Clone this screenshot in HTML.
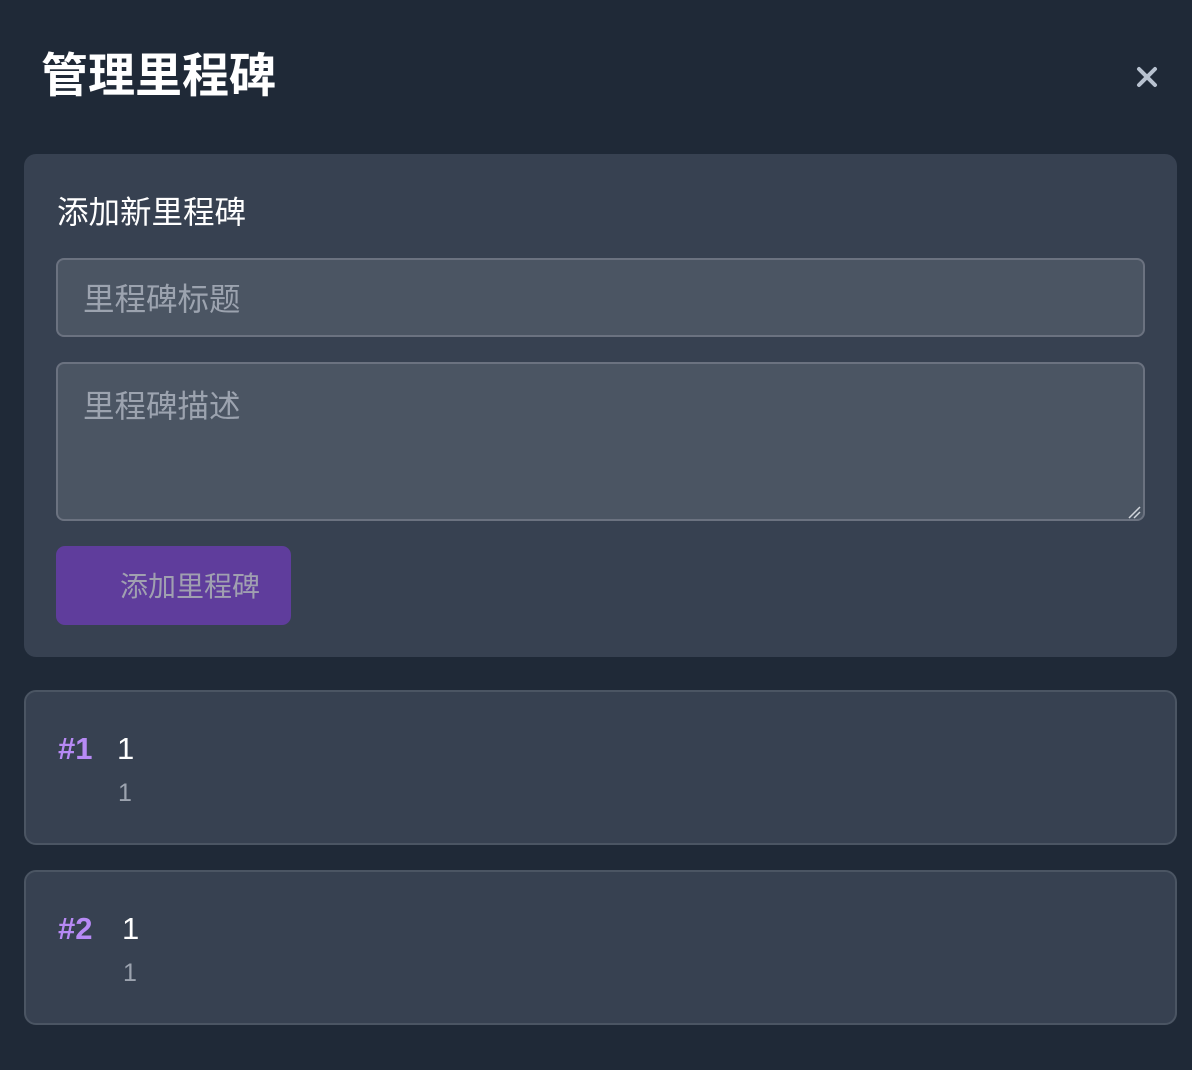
<!DOCTYPE html>
<html><head><meta charset="utf-8"><style>
*{box-sizing:border-box;margin:0;padding:0}
body{width:1192px;height:1070px;background:#1f2937;font-family:"Liberation Sans","Noto Sans CJK SC",sans-serif;position:relative;overflow:hidden}
.abs{position:absolute}
h1{position:absolute;left:41px;top:46px;font-size:47px;font-weight:700;color:#fff;line-height:60px}
.close{position:absolute;left:1134px;top:64px;width:26px;height:26px}
.card{position:absolute;left:24px;width:1153px;background:#374151;border-radius:12px}
.inp{position:absolute;left:56px;width:1089px;background:#4b5563;border:2px solid #6b7280;border-radius:8px;color:#9ca3af;font-size:31.5px;padding-left:25px}
.btn{position:absolute;left:56px;top:546px;width:235px;height:79px;background:#5f3d9c;border-radius:9px;color:#a0a0b0;font-size:28px;line-height:81px;padding-left:64px}
.m{border:2px solid #4b5563;height:155px}
.num{position:absolute;color:#b78af5;font-weight:700;font-size:31px}
.t{position:absolute;color:#fff;font-size:31px}
.d{position:absolute;color:#9ca3af;font-size:25px}
</style></head><body>
<h1>管理里程碑</h1>
<svg class="close" viewBox="0 0 26 26"><path d="M5 5L21 21M21 5L5 21" stroke="#b8c2d0" stroke-width="4" stroke-linecap="round"/></svg>
<div class="card" style="top:154px;height:503px"></div>
<div class="abs" style="left:57px;top:192px;font-size:31.5px;color:#fff;line-height:40px">添加新里程碑</div>
<div class="inp" style="top:258px;height:79px;line-height:78px">里程碑标题</div>
<div class="inp" style="top:362px;height:159px;padding-top:22px;line-height:40px">里程碑描述</div>
<svg class="abs" style="left:1127px;top:505px" width="14" height="14"><path d="M2 13L13 2M7 13L13 7" stroke="#d1d5db" stroke-width="1.5"/></svg>
<div class="btn">添加里程碑</div>
<div class="card m" style="top:690px"></div>
<div class="num" style="left:58px;top:731px">#1</div>
<div class="t" style="left:117px;top:731px">1</div>
<div class="d" style="left:118px;top:779px">1</div>
<div class="card m" style="top:870px"></div>
<div class="num" style="left:58px;top:911px">#2</div>
<div class="t" style="left:122px;top:911px">1</div>
<div class="d" style="left:123px;top:959px">1</div>
</body></html>
